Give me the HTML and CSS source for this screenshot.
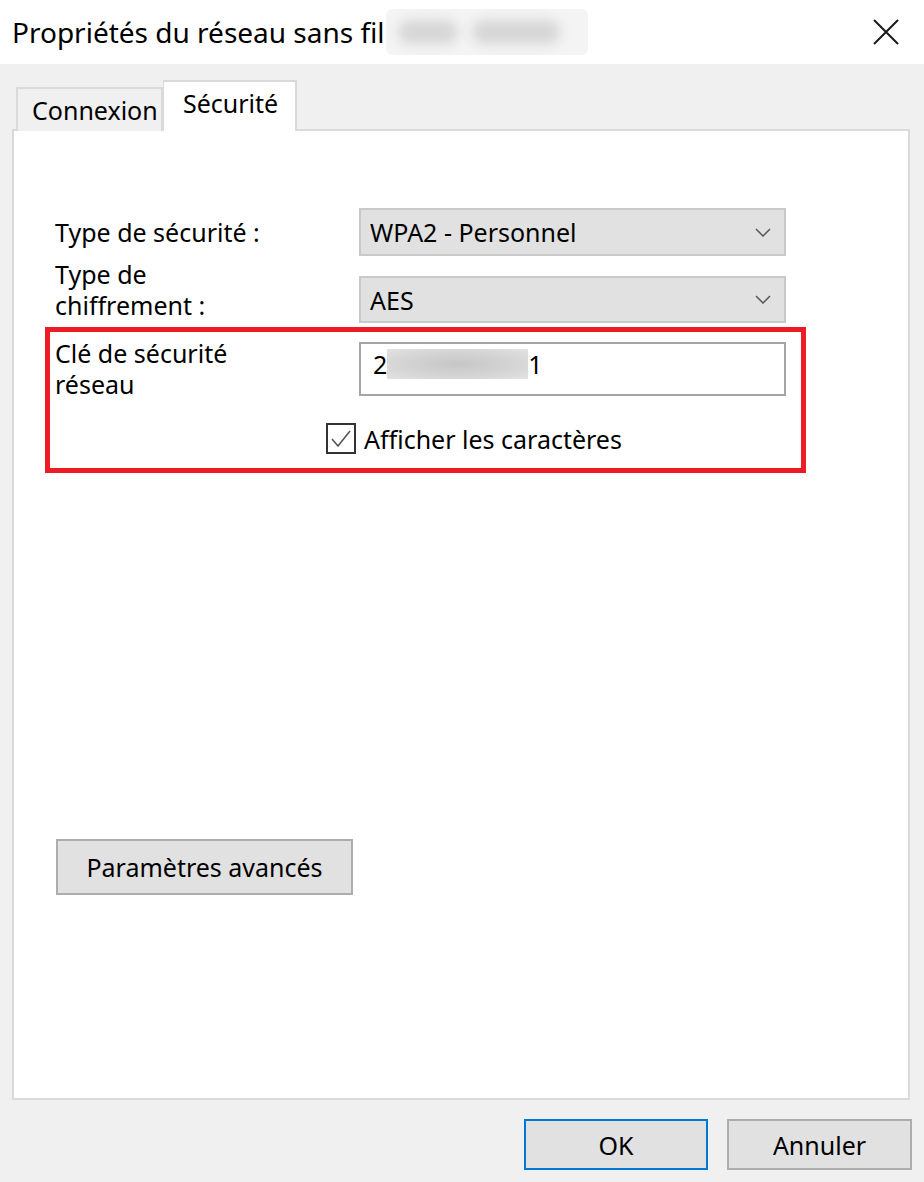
FILE: index.html
```html
<!DOCTYPE html>
<html lang="fr">
<head>
  <meta charset="UTF-8">
  <title>Propriétés du réseau sans fil</title>
  <link rel="stylesheet" href="styles.css">
</head>
<body>

<div class="dialog">
  <header class="titlebar">
    <h1 class="title">Propriétés du réseau sans fil</h1>
    <span class="title-blur"><span class="blob b1"></span><span class="blob b2"></span></span>
    <button class="close" aria-label="Fermer">
      <svg width="26" height="26" viewBox="0 0 26 26">
        <path d="M1 1 L25 25 M25 1 L1 25" stroke="#1a1a1a" stroke-width="2" fill="none"/>
      </svg>
    </button>
  </header>

  <div class="body">
    <nav class="tabs">
      <div class="tab">Connexion</div>
      <div class="tab active">Sécurité</div>
    </nav>

    <section class="panel">
      <div class="row">
        <label class="label">Type de sécurité :</label>
        <div class="combo">
          <span>WPA2 - Personnel</span>
          <svg class="chevron" width="16" height="9" viewBox="0 0 16 9">
            <path d="M1 1 L8 8 L15 1" stroke="#555" stroke-width="1.5" fill="none"/>
          </svg>
        </div>
      </div>

      <div class="row row-2">
        <label class="label">Type de<br>chiffrement :</label>
        <div class="combo">
          <span>AES</span>
          <svg class="chevron" width="16" height="9" viewBox="0 0 16 9">
            <path d="M1 1 L8 8 L15 1" stroke="#555" stroke-width="1.5" fill="none"/>
          </svg>
        </div>
      </div>

      <div class="highlight">
        <div class="row row-key">
          <label class="label">Clé de sécurité<br>réseau</label>
          <div class="field">
            <span>2</span><span class="field-blur"></span><span>1</span>
          </div>
        </div>
        <div class="check-row">
          <span class="checkbox">
            <svg width="24" height="22" viewBox="0 0 24 22">
              <path d="M3 11 L9 18 L21 3" stroke="#555" stroke-width="1.6" fill="none"/>
            </svg>
          </span>
          <span>Afficher les caractères</span>
        </div>
      </div>

      <button class="btn advanced">Paramètres avancés</button>
    </section>

    <footer class="footer">
      <button class="btn default">OK</button>
      <button class="btn">Annuler</button>
    </footer>
  </div>
</div>

</body>
</html>
```

FILE: styles.css
```css
body {
  margin: 0;
  background-color: #f0f0f0;
  font-family: "Noto Sans", "Open Sans", sans-serif;
  font-size: 25px;
  color: #000;
}

.dialog {
  width: 924px;
  height: 1182px;
}

.titlebar {
  height: 64px;
  background-color: #fff;
  display: flex;
  align-items: center;
  padding-left: 12px;
}

.title {
  margin: 0;
  font-size: 28px;
  font-weight: normal;
}

.title-blur {
  width: 202px;
  height: 46px;
  margin-left: 1px;
  background-color: #f4f4f4;
  border-radius: 6px;
  display: flex;
  align-items: center;
  gap: 14px;
  padding-left: 12px;
  box-sizing: border-box;
}

.blob {
  height: 24px;
  background-color: #d6d6d6;
  border-radius: 12px;
  filter: blur(6px);
}

.b1 { width: 60px; }
.b2 { width: 88px; }

.close {
  margin-left: auto;
  margin-right: 25px;
  background: transparent;
  border: none;
  padding: 0;
  height: 26px;
}

.body {
  padding: 16px 14px 0 12px;
}

.tabs {
  display: flex;
  align-items: flex-end;
  padding-left: 4px;
  position: relative;
  z-index: 1;
  margin-bottom: -2px;
}

.tab {
  height: 44px;
  box-sizing: border-box;
  border: 2px solid #dadada;
  border-bottom: none;
  background-color: #f0f0f0;
  padding: 4px 0 0 14px;
  width: 147px;
  font-size: 25px;
}

.tab.active {
  height: 51px;
  width: 134px;
  background-color: #fff;
  border-left: 1px solid #dadada;
  padding: 4px 0 0 19px;
}

.panel {
  height: 971px;
  box-sizing: border-box;
  background-color: #fff;
  border: 2px solid #dadada;
  padding: 77px 0 0 41px;
}

.row {
  display: grid;
  grid-template-columns: 304px 427px;
  grid-template-rows: 48px;
  align-items: center;
}

.row-2 {
  margin-top: 20px;
  grid-template-rows: 47px;
}

.label {
  line-height: 31px;
}

.row-2 .label {
  align-self: start;
  margin-top: -17px;
}

.combo {
  height: 100%;
  box-sizing: border-box;
  background-color: #e1e1e1;
  border: 2px solid #c9c9c9;
  display: flex;
  align-items: center;
  padding: 0 13px 0 9px;
}

.chevron {
  margin-left: auto;
}

.highlight {
  width: 761px;
  box-sizing: border-box;
  margin: 4px 0 0 -10px;
  border: 5px solid #ed1c24;
  padding: 10px 0 14px 5px;
}

.row-key {
  grid-template-rows: 54px;
  align-items: start;
}

.row-key .label {
  margin-top: -4px;
}

.field {
  height: 54px;
  box-sizing: border-box;
  border: 2px solid #a5a5a5;
  display: flex;
  align-items: flex-start;
  padding: 3px 0 0 12px;
}

.field-blur {
  width: 141px;
  height: 30px;
  margin-top: 2px;
  background: radial-gradient(ellipse at center, #c6c6c6 0%, #d4d4d4 55%, #e2e2e2 100%);
}

.check-row {
  display: flex;
  align-items: center;
  gap: 8px;
  height: 31px;
  margin: 27px 0 0 271px;
}

.checkbox {
  width: 30px;
  height: 31px;
  box-sizing: border-box;
  border: 2px solid #333;
  display: flex;
  align-items: center;
  justify-content: center;
}

.btn {
  font-family: inherit;
  font-size: 25px;
  color: #000;
  background-color: #e1e1e1;
  border: 2px solid #adadad;
  padding: 0;
  cursor: pointer;
}

.advanced {
  display: block;
  margin: 366px 0 0 1px;
  width: 297px;
  height: 56px;
}

.footer {
  display: flex;
  justify-content: flex-end;
  gap: 19px;
  margin: 19px -2px 0 0;
}

.footer .btn {
  width: 185px;
  height: 51px;
}

.footer .btn.default {
  width: 184px;
  border-color: #0078d7;
}
```
